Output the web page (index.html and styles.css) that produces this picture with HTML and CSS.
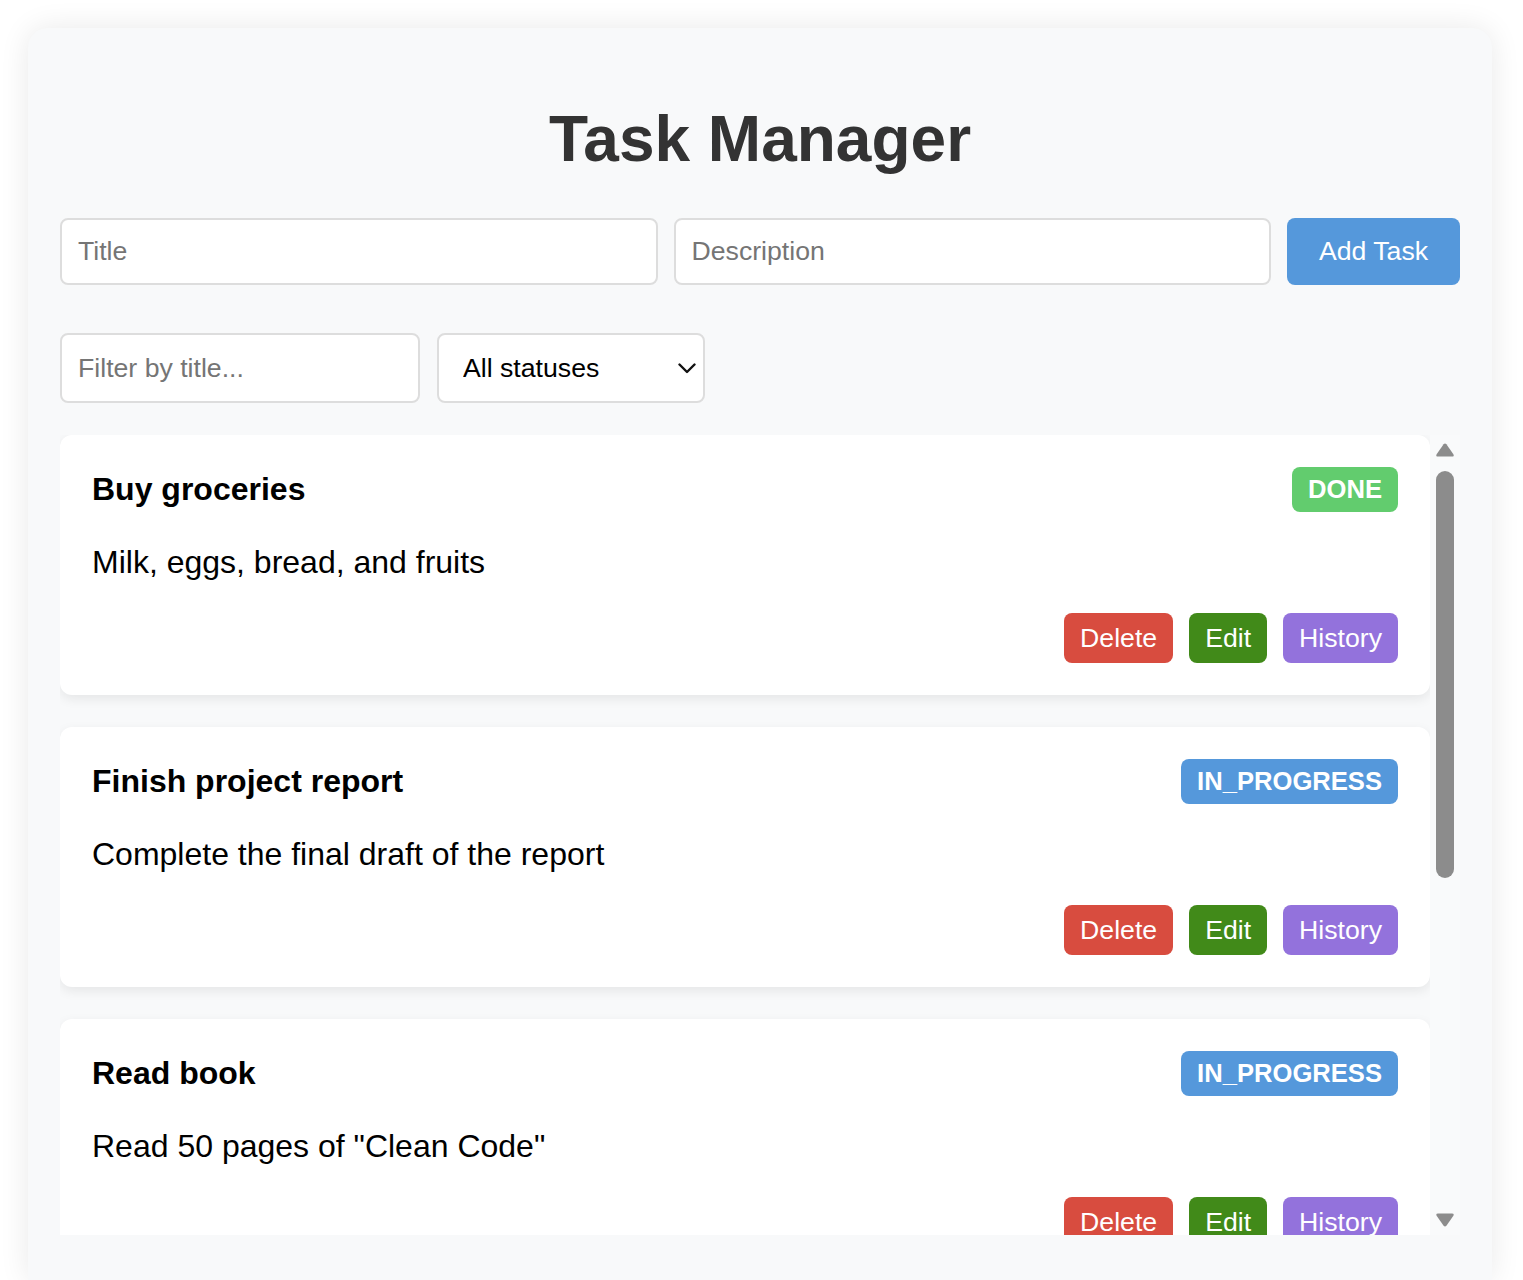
FILE: index.html
```html
<!DOCTYPE html>
<html lang="en">
<head>
<meta charset="utf-8">
<title>Task Manager</title>
<link rel="stylesheet" href="styles.css">
</head>
<body>
<div class="app">
  <h1 class="app-title">Task Manager</h1>

  <form class="add-form">
    <input class="field" type="text" placeholder="Title">
    <input class="field" type="text" placeholder="Description">
    <button class="add-btn" type="button">Add Task</button>
  </form>

  <div class="filters">
    <input class="filter-input" type="text" placeholder="Filter by title...">
    <select class="status-select">
      <option>All statuses</option>
      <option>TODO</option>
      <option>IN_PROGRESS</option>
      <option>DONE</option>
    </select>
  </div>

  <div class="task-area">
    <div class="task-list">
      <div class="task-card">
        <div class="task-head">
          <h3 class="task-title">Buy groceries</h3>
          <span class="badge badge-done">DONE</span>
        </div>
        <p class="task-desc">Milk, eggs, bread, and fruits</p>
        <div class="task-actions">
          <button class="btn btn-delete">Delete</button>
          <button class="btn btn-edit">Edit</button>
          <button class="btn btn-history">History</button>
        </div>
      </div>

      <div class="task-card">
        <div class="task-head">
          <h3 class="task-title">Finish project report</h3>
          <span class="badge badge-progress">IN_PROGRESS</span>
        </div>
        <p class="task-desc">Complete the final draft of the report</p>
        <div class="task-actions">
          <button class="btn btn-delete">Delete</button>
          <button class="btn btn-edit">Edit</button>
          <button class="btn btn-history">History</button>
        </div>
      </div>

      <div class="task-card">
        <div class="task-head">
          <h3 class="task-title">Read book</h3>
          <span class="badge badge-progress">IN_PROGRESS</span>
        </div>
        <p class="task-desc">Read 50 pages of "Clean Code"</p>
        <div class="task-actions">
          <button class="btn btn-delete">Delete</button>
          <button class="btn btn-edit">Edit</button>
          <button class="btn btn-history">History</button>
        </div>
      </div>

      <div class="task-card">
        <div class="task-head">
          <h3 class="task-title">Morning workout</h3>
          <span class="badge badge-todo">TODO</span>
        </div>
        <p class="task-desc">30 minutes of running in the park</p>
        <div class="task-actions">
          <button class="btn btn-delete">Delete</button>
          <button class="btn btn-edit">Edit</button>
          <button class="btn btn-history">History</button>
        </div>
      </div>
    </div>

    <div class="scrollbar" aria-hidden="true">
      <div class="sb-btn">
        <svg width="18" height="14" viewBox="0 0 18 14"><path d="M7.6 1.2 Q9 -0.2 10.4 1.2 L17.4 11.2 Q18.4 13.6 16 13.6 L2 13.6 Q-0.4 13.6 0.6 11.2 Z" fill="#8c8c8c"/></svg>
      </div>
      <div class="sb-track">
        <div class="sb-thumb"></div>
      </div>
      <div class="sb-btn">
        <svg width="18" height="14" viewBox="0 0 18 14"><path d="M7.6 12.8 Q9 14.2 10.4 12.8 L17.4 2.8 Q18.4 0.4 16 0.4 L2 0.4 Q-0.4 0.4 0.6 2.8 Z" fill="#8c8c8c"/></svg>
      </div>
    </div>
  </div>
</div>
</body>
</html>
```

FILE: styles.css
```css
* {
  box-sizing: border-box;
}

html, body {
  margin: 0;
  padding: 0;
  background: #ffffff;
  font-family: "Liberation Sans", Arial, Helvetica, sans-serif;
}

.app {
  margin: 28px 31px 0 28px;
  padding: 32px 32px 45px 32px;
  background: #f8f9fa;
  border-radius: 20px 20px 0 0;
  box-shadow: 0 0 30px rgba(0, 0, 0, 0.09);
}

.app-title {
  margin: 42px 0 42px;
  font-size: 64px;
  font-weight: bold;
  color: #333333;
  text-align: center;
  line-height: normal;
}

.add-form {
  display: flex;
  gap: 16px;
  margin: 0;
}

.field {
  flex: 1;
  min-width: 0;
  height: 67px;
  padding: 16px;
  font-family: inherit;
  font-size: 26.67px;
  color: #000;
  background: #ffffff;
  border: 2px solid #dddddd;
  border-radius: 8px;
  outline: none;
}

.field::placeholder,
.filter-input::placeholder {
  color: #757575;
}

.add-btn {
  flex: 0 0 173px;
  height: 67px;
  padding: 0;
  font-family: inherit;
  font-size: 26.67px;
  color: #ffffff;
  background: #5598db;
  border: none;
  border-radius: 8px;
}

.filters {
  display: flex;
  gap: 17px;
  margin-top: 48px;
}

.filter-input {
  width: 360px;
  height: 70px;
  padding: 0 16px;
  font-family: inherit;
  font-size: 26.67px;
  background: #ffffff;
  border: 2px solid #dddddd;
  border-radius: 8px;
  outline: none;
}

.status-select {
  width: 268px;
  height: 70px;
  padding: 0 40px 0 24px;
  font-family: inherit;
  font-size: 26.67px;
  color: #000;
  background-color: #ffffff;
  background-image: url("data:image/svg+xml,%3Csvg xmlns='http://www.w3.org/2000/svg' width='18' height='11' viewBox='0 0 18 11'%3E%3Cpath d='M1.5 1.5 L9 9 L16.5 1.5' fill='none' stroke='%23111' stroke-width='2.4' stroke-linecap='round' stroke-linejoin='round'/%3E%3C/svg%3E");
  background-repeat: no-repeat;
  background-position: right 7px center;
  background-size: 18px 11px;
  border: 2px solid #dddddd;
  border-radius: 8px;
  appearance: none;
  -webkit-appearance: none;
  outline: none;
}

.task-area {
  margin-top: 32px;
  height: 800px;
  display: flex;
}

.task-list {
  flex: 1;
  min-width: 0;
  overflow: hidden;
  display: flex;
  flex-direction: column;
  gap: 32px;
}

.scrollbar {
  flex: 0 0 30px;
  display: flex;
  flex-direction: column;
  background: #f9fafb;
}

.sb-btn {
  flex: 0 0 30px;
  display: flex;
  align-items: center;
  justify-content: center;
}

.sb-track {
  flex: 1;
  padding: 6px;
}

.sb-thumb {
  height: 407px;
  background: #8c8c8c;
  border-radius: 9px;
}

.task-card {
  flex: 0 0 auto;
  background: #ffffff;
  border-radius: 12px;
  padding: 32px;
  box-shadow: 0 4px 12px rgba(0, 0, 0, 0.08);
}

.task-head {
  display: flex;
  align-items: center;
  justify-content: space-between;
}

.task-title {
  margin: 0;
  font-size: 32px;
  font-weight: bold;
  color: #000;
  line-height: normal;
}

.badge {
  display: inline-block;
  padding: 8px 16px;
  font-size: 25.6px;
  font-weight: bold;
  color: #ffffff;
  border-radius: 8px;
  line-height: normal;
}

.badge-done {
  background: #62cc6e;
}

.badge-progress {
  background: #5598db;
}

.badge-todo {
  background: #f0ad4e;
}

.task-desc {
  margin: 32px 0;
  font-size: 32px;
  color: #000;
  line-height: normal;
}

.task-actions {
  display: flex;
  justify-content: flex-end;
  gap: 16px;
}

.btn {
  height: 50px;
  padding: 0 16px;
  font-family: inherit;
  font-size: 26.67px;
  color: #ffffff;
  border: none;
  border-radius: 8px;
}

.btn-delete {
  background: #d84c3f;
}

.btn-edit {
  background: #418a19;
}

.btn-history {
  background: #9372dc;
}
```
